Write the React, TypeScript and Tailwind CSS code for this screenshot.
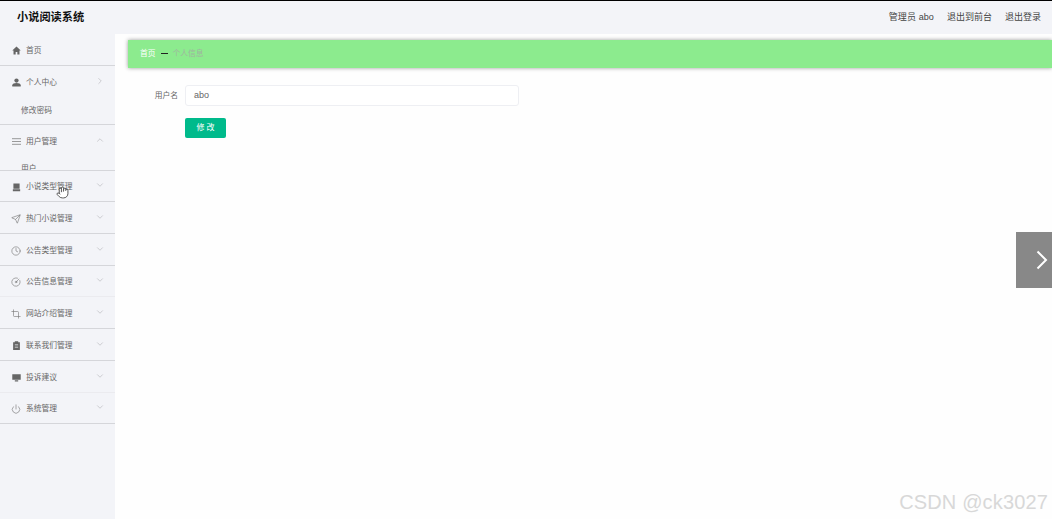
import { ChevronDown, ChevronRight, ChevronUp, CircleGauge, Clock, Crop, Hand, Power, Send } from 'lucide-react';
import type { ReactNode } from 'react';

const cjkFont = "font-['Liberation_Sans','Noto_Sans_CJK_SC',sans-serif]";

const HomeIcon = () => (
  <svg viewBox="0 0 16 16" className="size-[9px] fill-[#666]">
    <path d="M8 1 0.5 8h2.200v7h3.800v-4.500h3V15h3.800V8h2.200z" />
  </svg>
);
const UserIcon = () => (
  <svg viewBox="0 0 16 16" className="size-[9px] fill-[#666]">
    <circle cx="8" cy="4.500" r="3.800" />
    <path d="M0.500 15v-2c0-2.500 3.500-4 7.500-4s7.500 1.500 7.500 4v2z" />
  </svg>
);
const ListIcon = () => (
  <svg viewBox="0 0 16 16" className="size-[9px] stroke-[#777] stroke-[1.3]">
    <path d="M0 3h16M0 8h16M0 13h16" />
  </svg>
);
const BoxIcon = () => (
  <svg viewBox="0 0 16 16" className="size-[9px] fill-[#666]">
    <path d="M2.500 1h11v9h-11zM1.500 11h13v3.500h-13z" />
  </svg>
);
const ClipIcon = () => (
  <svg viewBox="0 0 16 16" className="size-[9px] fill-[#666]">
    <path d="M2 2h3V0.500h6V2h3v14H2zM5 6v1.500h6V6zM5 10v1.500h6V10z" />
  </svg>
);
const ScreenIcon = () => (
  <svg viewBox="0 0 16 16" className="size-[9px] fill-[#666]">
    <path d="M0.500 2h15v10h-15zM5 13h6v2H5z" />
  </svg>
);

const smallIcon = 'size-[10px] -ml-px text-[#777]';

type MenuItem = {
  label: string;
  icon: ReactNode;
  arrow?: 'right' | 'up' | 'down' | 'none';
  faintBorder?: boolean;
  short?: boolean;
  child?: ReactNode;
};

const menu: MenuItem[] = [
  { label: '首页', icon: <HomeIcon />, arrow: 'none' },
  {
    label: '个人中心',
    icon: <UserIcon />,
    arrow: 'right',
    child: <div className="h-[27px] pl-[21px] pt-[4px] text-[7.75px] leading-[20px] text-[#666]">修改密码</div>,
  },
  {
    label: '用户管理',
    icon: <ListIcon />,
    arrow: 'up',
    child: <div className="h-[14px] overflow-hidden pl-[21px] pt-[7px] text-[7.75px] leading-[12px] text-[#666]">用户</div>,
  },
  { label: '小说类型管理', icon: <BoxIcon />, short: true },
  { label: '热门小说管理', icon: <Send className={smallIcon} strokeWidth={1.5} /> },
  { label: '公告类型管理', icon: <Clock className={smallIcon} strokeWidth={1.5} /> },
  { label: '公告信息管理', icon: <CircleGauge className={smallIcon} strokeWidth={1.5} />, faintBorder: true, short: true },
  { label: '网站介绍管理', icon: <Crop className={smallIcon} strokeWidth={1.5} /> },
  { label: '联系我们管理', icon: <ClipIcon /> },
  { label: '投诉建议', icon: <ScreenIcon />, faintBorder: true },
  { label: '系统管理', icon: <Power className={smallIcon} strokeWidth={1.5} />, short: true },
];

function SideItem({ item }: { item: MenuItem }) {
  const arrow = item.arrow ?? 'down';
  const chevron = 'mb-[4px] size-[10px] text-[#b4b4b8]';
  return (
    <div className={`border-b ${item.faintBorder ? 'border-[#ebebef]' : 'border-[#d5d6da]'}`}>
      <div className={`flex items-center pl-3 pr-[10px] pt-[2px] ${item.short ? 'h-[30px]' : 'h-[31px]'}`}>
        <span className="flex w-[14px] shrink-0">{item.icon}</span>
        <span className="flex-1 text-[7.75px] text-[#666]">{item.label}</span>
        {arrow === 'down' && <ChevronDown className={chevron} strokeWidth={1.5} />}
        {arrow === 'right' && <ChevronRight className={chevron} strokeWidth={1.5} />}
        {arrow === 'up' && <ChevronUp className={chevron} strokeWidth={1.5} />}
      </div>
      {item.child}
    </div>
  );
}

export default function App() {
  return (
    <div className={`relative flex h-[519px] w-[1052px] flex-col overflow-hidden border-t border-black bg-[#f3f4f8] ${cjkFont}`}>
      <header className="flex h-[33px] shrink-0 items-center justify-between pl-[17px] pr-[11px]">
        <h1 className="text-[11.2px] font-bold text-[#111]">小说阅读系统</h1>
        <div className="flex gap-[13px] text-[9px] text-[#444]">
          <span className="tracking-[0.1px]">管理员 abo</span>
          <span>退出到前台</span>
          <span>退出登录</span>
        </div>
      </header>

      <div className="flex flex-1">
        <aside className="w-[115px] shrink-0">
          {menu.map((item) => (
            <SideItem key={item.label} item={item} />
          ))}
        </aside>

        <main className="flex-1 bg-[#fefefe] pl-[13px] pt-[6px]">
          <div className="flex h-[28px] items-center gap-[5px] bg-[#8ceb8e] pl-[12px] text-[7.75px] shadow-[0_0_4px_rgba(0,0,0,0.4)]">
            <span className="text-white">首页</span>
            <span className="mb-[1px] h-[1.5px] w-[7px] bg-[#222]" />
            <span className="text-[#a0b4a0]">个人信息</span>
          </div>

          <form className="mt-[17px]">
            <div className="flex items-center">
              <label className="w-[57px] pr-[7px] text-right text-[7.75px] text-[#666]">用户名</label>
              <div className="flex h-[21px] w-[334px] items-center rounded-[3px] border border-[#eeeff3] bg-white pl-[8px] text-[9px] text-[#666]">
                abo
              </div>
            </div>
            <button
              type="button"
              className="ml-[57px] mt-[12px] h-[20px] w-[41px] rounded-[2px] bg-[#00ba8b] text-[8px] text-white"
            >
              修 改
            </button>
          </form>
        </main>
      </div>

      <div className="absolute right-0 top-[231px] flex h-[56px] w-[36px] items-center justify-end bg-[#888] pr-[4px]">
        <svg viewBox="0 0 12 20" className="h-[20px] w-[12px] fill-none stroke-white stroke-2">
          <path d="M1.500 1.500 10 10l-8.500 8.500" />
        </svg>
      </div>
      <Hand className="absolute left-[56px] top-[185px] size-[13px] fill-white text-[#333]" strokeWidth={1.5} />
      <div className="absolute bottom-[6px] right-[4px] font-['Liberation_Sans',sans-serif] text-[20px] leading-[22px] tracking-[0.15px] text-[#d8d8d8]">
        CSDN @ck3027
      </div>
    </div>
  );
}
